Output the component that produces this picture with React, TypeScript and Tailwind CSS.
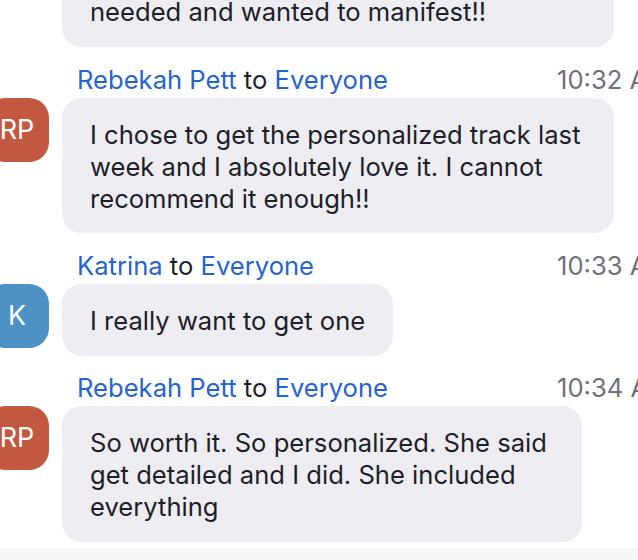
import React from "react";

const font = { fontFamily: "Inter, 'Noto Sans', sans-serif" };

function Header({ name, time, mt }: { name: string; time: string; mt: string }) {
  return (
    <div className={`flex h-[32px] items-center mb-[3px] whitespace-nowrap text-[25.6px] leading-[32px] pt-[2px] ${mt}`}>
      <div className="ml-[77px] flex-1">
        <span className="text-[#2763cf]">{name}</span>
        <span className="text-[#1e1e28]"> to </span>
        <span className="text-[#2763cf]">Everyone</span>
      </div>
      <div className="w-[81px] shrink-0 text-[#70707b]">{time}</div>
    </div>
  );
}

function Avatar({ initials, color }: { initials: string; color: string }) {
  return (
    <div
      className={`ml-[-15px] w-[64px] h-[64px] shrink-0 rounded-[20px] flex items-center justify-center text-white text-[27px] ${color}`}
    >
      {initials}
    </div>
  );
}

const bubble =
  "rounded-[20px] bg-[#ededf2] pl-[28px] pt-[21px] text-[25.6px] leading-[32px] text-[#1e1e28] whitespace-nowrap";

export default function App() {
  return (
    <div className="w-[638px] h-[560px] overflow-hidden bg-white relative" style={font}>
      <div className="flex flex-col">
        <div className={`mt-[-25px] ml-[62px] w-[552px] pb-[19px] ${bubble}`}>
          needed and wanted to manifest!!
        </div>

        <Header name="Rebekah Pett" time="10:32 AM" mt="mt-[16px]" />
        <div className="flex gap-[13px]">
          <Avatar initials="RP" color="bg-[#c2583f]" />
          <div className={`w-[552px] pb-[18px] ${bubble}`}>
            I chose to get the personalized track last
            <br />
            week and I absolutely love it. I cannot
            <br />
            recommend it enough!!
          </div>
        </div>

        <Header name="Katrina" time="10:33 AM" mt="mt-[16px]" />
        <div className="flex gap-[13px]">
          <Avatar initials="K" color="bg-[#4d91c5]" />
          <div className={`w-[331px] pb-[19px] ${bubble}`}>I really want to get one</div>
        </div>

        <Header name="Rebekah Pett" time="10:34 AM" mt="mt-[15px]" />
        <div className="flex gap-[13px]">
          <Avatar initials="RP" color="bg-[#c2583f]" />
          <div className={`w-[520px] pb-[19px] ${bubble}`}>
            So worth it. So personalized. She said
            <br />
            get detailed and I did. She included
            <br />
            everything
          </div>
        </div>
      </div>
      <div className="absolute left-0 right-0 top-[548px] bottom-0 bg-[#f6f6f9]" />
    </div>
  );
}
